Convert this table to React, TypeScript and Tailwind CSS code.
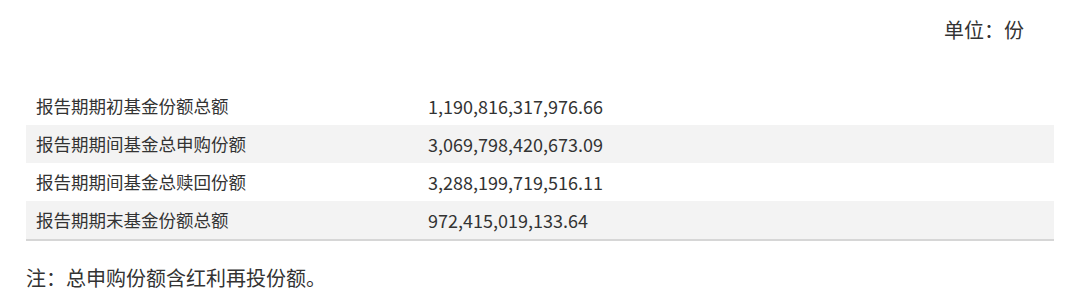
const rows = [
  { label: "报告期期初基金份额总额", value: "1,190,816,317,976.66" },
  { label: "报告期期间基金总申购份额", value: "3,069,798,420,673.09" },
  { label: "报告期期间基金总赎回份额", value: "3,288,199,719,516.11" },
  { label: "报告期期末基金份额总额", value: "972,415,019,133.64" },
];

export default function App() {
  return (
    <div
      className="w-[1080px] h-[300px] bg-white px-[26px] text-[#333333]"
      style={{ fontFamily: '"Noto Sans CJK SC", "Noto Sans", sans-serif' }}
    >
      <div className="pt-[18px] pr-[30px] text-right text-[20px] leading-[24px]">单位：份</div>

      <div className="mt-[45px] border-b-2 border-[#d6d6d6]">
        {rows.map((row, i) => (
          <div
            key={i}
            className={`flex h-[38px] items-center ${i % 2 === 1 ? "bg-[#f3f3f3]" : "bg-white"}`}
          >
            <div className="w-[392px] pl-[10px] text-[17.5px]">{row.label}</div>
            <div className="pl-[10px] text-[18px]">{row.value}</div>
          </div>
        ))}
      </div>

      <div className="mt-[23px] text-[20px] leading-[28px]">注：总申购份额含红利再投份额。</div>
    </div>
  );
}
